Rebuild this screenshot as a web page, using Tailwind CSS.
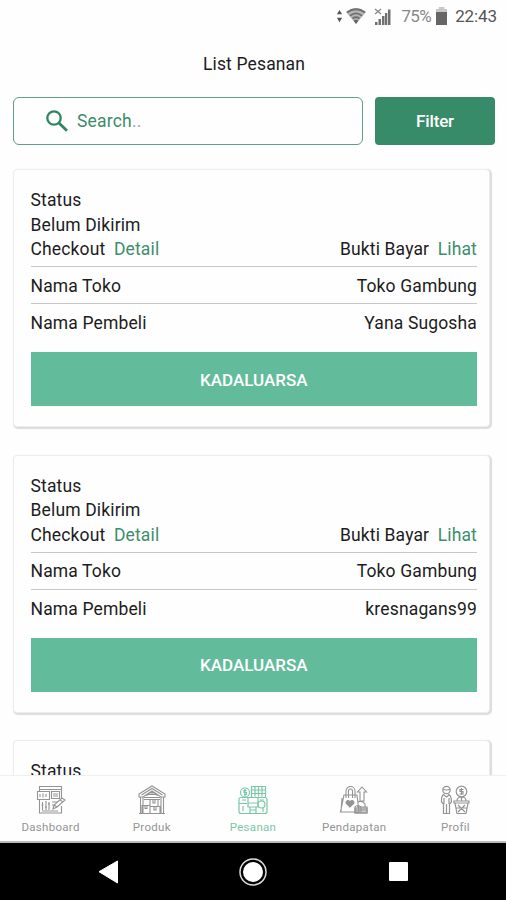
<!DOCTYPE html>
<html lang="id">
<head>
<meta charset="utf-8">
<title>List Pesanan</title>
<script src="https://cdn.jsdelivr.net/npm/@tailwindcss/browser@4"></script>
</head>
<body class="bg-white">
<div class="w-[506px] h-[900px] overflow-hidden flex flex-col bg-[#fefefe] text-[#1c1c1c] font-['Roboto',sans-serif] text-[17.5px] leading-[24.5px]">
  <header class="h-8 shrink-0 flex items-center justify-end pr-[9px] text-[#555]">
    <svg class="w-[7px] h-[14px] mr-[3px]" viewBox="0 0 8 14" fill="#555"><path d="M4 0 7 5H1zM4 14 1 9H7z"/></svg>
    <svg class="w-[20px] h-[16px] mr-[8px]" viewBox="0 0 20 16"><path d="M0 4Q10-4 20 4L10 16z" fill="#b5b5b5"/><g fill="none" stroke="#707070" stroke-width="1.8"><path d="M1 4.5Q10-2 19 4.5M4 7.700Q10 3 16 7.700M6.500 10.500Q10 8 13.500 10.500"/></g><path d="M7.500 12.500Q10 11 12.500 12.500L10 16z" fill="#666"/></svg>
    <svg class="w-[17px] h-[17px] mr-[10px]" viewBox="0 0 17 17"><path d="M1 1 7 6M7 1 1 6" stroke="#888" stroke-width="1.300"/><path d="M1 14h2.500v3H1zM4.500 11H7v6H4.500zM8 8h2.500v9H8zM11 5h2.300v12H11zM14 1.500h2.500V17H14z" fill="#707070"/></svg>
    <span class="text-[17px] text-[#888] mr-[5px] tracking-[-0.600px]">75%</span>
    <svg class="w-[11px] h-[18px] mr-[8px]" viewBox="0 0 12 18" preserveAspectRatio="none"><path d="M3 0h6v2h3v5H0V2h3z" fill="#c8c8c8"/><path d="M0 5h12v13H0z" fill="#666"/></svg>
    <span class="text-[17px] tracking-[-0.100px]">22:43</span>
  </header>
  <h1 class="h-[65px] shrink-0 text-center pt-[20px] pl-[2px] tracking-[0.150px]">List Pesanan</h1>
  <div class="flex gap-[12px] pl-[13px] pr-[11px] h-[48px] shrink-0">
    <div class="w-[350px] rounded-[6px] border-[1.5px] border-[#5f9f84] flex items-center pl-[32px] text-[#3e8b6c]">
      <svg class="w-[22px] h-[22px] mr-[9px]" viewBox="0 0 22 22" fill="none" stroke="#2f8664" stroke-width="2.300"><circle cx="8" cy="8" r="6.700"/><path d="m13 13 8 7.800" stroke-width="2.800"/></svg>
      <span class="pt-px tracking-[0.200px]">Search<span class="text-[#98ad9e]">..</span></span>
    </div>
    <button class="flex-1 rounded-[4px] bg-[#378b69] text-white font-medium text-[17px] tracking-[-0.150px]">Filter</button>
  </div>
  <main class="flex-1 min-h-0 overflow-hidden pt-[24px] pl-[13px] pr-[16px] flex flex-col gap-[27.500px] tracking-[0.150px]">
    <section class="h-[258px] shrink-0 rounded-[4px] border border-[#ededed] shadow-[1px_1px_1px_1px_#dcdcdc] bg-[#fefefe] pt-[18px] pl-[16.500px] pr-[12px]">
      <div>Status</div><div>Belum Dikirim</div>
      <div class="flex justify-between h-[30px] border-b-[1.500px] border-[#c8c8c8]"><div>Checkout <span class="text-[#3c8e6c] ml-1">Detail</span></div><div>Bukti Bayar <span class="text-[#3c8e6c] ml-1">Lihat</span></div></div>
      <div class="flex justify-between items-center pt-[2px] h-[37px] border-b-[1.500px] border-[#c8c8c8]"><span>Nama Toko</span><span>Toko Gambung</span></div>
      <div class="flex justify-between items-center pt-[2px] h-[37px]"><span>Nama Pembeli</span><span>Yana Sugosha</span></div>
      <button class="block mt-[11px] w-full h-[54px] pt-[2px] bg-[#62bc9b] text-white font-medium text-[17px] tracking-normal">KADALUARSA</button>
    </section>
    <section class="h-[258px] shrink-0 rounded-[4px] border border-[#ededed] shadow-[1px_1px_1px_1px_#dcdcdc] bg-[#fefefe] pt-[18px] pl-[16.500px] pr-[12px]">
      <div>Status</div><div>Belum Dikirim</div>
      <div class="flex justify-between h-[30px] border-b-[1.500px] border-[#c8c8c8]"><div>Checkout <span class="text-[#3c8e6c] ml-1">Detail</span></div><div>Bukti Bayar <span class="text-[#3c8e6c] ml-1">Lihat</span></div></div>
      <div class="flex justify-between items-center pt-[2px] h-[37px] border-b-[1.500px] border-[#c8c8c8]"><span>Nama Toko</span><span>Toko Gambung</span></div>
      <div class="flex justify-between items-center pt-[2px] h-[37px]"><span>Nama Pembeli</span><span>kresnagans99</span></div>
      <button class="block mt-[11px] w-full h-[54px] pt-[2px] bg-[#62bc9b] text-white font-medium text-[17px] tracking-normal">KADALUARSA</button>
    </section>
    <section class="h-[258px] shrink-0 rounded-[4px] border border-[#ededed] shadow-[1px_1px_1px_1px_#dcdcdc] bg-[#fefefe] pt-[18px] pl-[16.500px] pr-[12px]">
      <div>Status</div>
    </section>
  </main>
  <nav class="h-[68px] shrink-0 border-t border-t-[#f0f0f0] border-b-2 border-b-[#bbb] bg-[#fefefe] grid grid-cols-5 text-[11.500px] leading-[14px] tracking-[0.300px] text-[#949494] pt-[9px]">
    <div class="flex flex-col items-center gap-[5px]">
      <svg class="w-[30px] h-[30px]" viewBox="0 0 30 30" fill="none" stroke="currentColor" stroke-width="1.100"><path d="M3.500 6V1.500h22V14M3.500 4.500h22M25.500 21v7h-22V23M1.500 6.500h12v8h-12zM15.500 6.500h8v7h-8zM4 9v3M7 8.500v4M10 9v3M17 9h5M17 11h5M3.500 14.500v13M6.500 17v8M10 16v9M13 17v8M5.500 20h2M9 22h2M12 19h2M16 17h6M16 20h3M6 26h16"/><path d="m17 24 1-4 8-7 3 2-8 7zM18 20l3 2M24 15l3 2"/></svg>
      <span>Dashboard</span></div>
    <div class="flex flex-col items-center gap-[5px]">
      <svg class="w-[30px] h-[30px]" viewBox="0 0 30 30" fill="none" stroke="currentColor" stroke-width="1.100"><path d="M2 9 15 1l13 8v3h-4L15 6l-9 6H2zM4.500 10 15 3.500 25.500 10M3.500 12v16M6 12v16M24 12v16M26.500 12v16M2 28.500h26M7 12.500h16M7 14.500h16M10 11V9.500h10V11M11 9h8M13 7.500h4M5 20.500h8v8H5zM13 14.500h8v7h-8zM13 21.500h10v7H13zM8 20.500v3h2v-3M16 15v3h2v-3M17 22v3h2v-3"/></svg>
      <span>Produk</span></div>
    <div class="flex flex-col items-center gap-[5px] text-[#7bc7a8]">
      <svg class="w-[30px] h-[30px]" viewBox="0 0 30 30" fill="none" stroke="currentColor" stroke-width="1.200"><circle cx="7" cy="7.500" r="4.500"/><path d="M8.500 5.500H6v2h2.500v2H6M7 4v7M13.500 12V1.500h14V12M13.500 5h14M13.500 8.500h14M17 1.500v10M20.500 1.500v10M24 1.500v10M3 12.500h24q2 0 2 2v12q0 2-2 2H3q-2 0-2-2v-12q0-2 2-2M1 18.500h8M4 15h4M10 13v5M20 13v5M22 15h4M10 18h10v4H10zM12 22v6M18 22v6M12 25h6M5 21v5M25 23v4"/><circle cx="23.500" cy="19.500" r="3.500"/></svg>
      <span>Pesanan</span></div>
    <div class="flex flex-col items-center gap-[5px]">
      <svg class="w-[30px] h-[30px]" viewBox="0 0 30 30" fill="none" stroke="currentColor" stroke-width="1.100"><path d="M7 13V6a4.500 4.500 0 0 1 9 0v7M9.500 13V6a2 2 0 0 1 4 0v7M5 10h13l2 17H1.500zM3 13l-1 14M23 2l4.500 5h-2.500v9h-4V7H18.500zM19 17q4-2 7 2v3M16 22q3-3 6 0v6h-6zM22 22h6v6h-6zM16 25h12M18 22h8"/><path d="m11 22-4-4c0-3 3-3 4-1 1-2 4-2 4 1z" fill="currentColor"/><path d="M16 23h12v5H16z" fill="currentColor" fill-opacity=".45"/></svg>
      <span>Pendapatan</span></div>
    <div class="flex flex-col items-center gap-[5px]">
      <svg class="w-[30px] h-[30px]" viewBox="0 0 30 30" fill="none" stroke="currentColor" stroke-width="1.200"><circle cx="6.500" cy="5" r="3.700"/><path d="M3 4q4 2 7 0M4 9Q1 11 1.500 17l2 2v9.500h6V19l2-2q0-6-3-8M4 13v6M9 13v6M6.500 19v9M4 10l2.500 2L9 10"/><circle cx="21.500" cy="6.500" r="5.300"/><path d="M23.500 4.500H20v2h3v2.500h-3.500M21.500 3v7M15 18h13l-2 10.500h-9zM14 16h15v2H14zM17 16q0-4 4.500-4t4.500 4M18 20l7 7M25 20l-7 7M16 23h11M21.500 12v4"/></svg>
      <span>Profil</span></div>
  </nav>
  <footer class="h-[57px] shrink-0 bg-black flex items-center pl-[98px]">
    <svg class="w-[21px] h-[24px]" viewBox="0 0 21 24"><path d="M1 11.700 19.500 1v22z" fill="#fff" stroke="#fff" stroke-linejoin="round"/></svg>
    <svg class="w-[30px] h-[30px] ml-[119px]" viewBox="0 0 30 30"><circle cx="15" cy="15" r="13" fill="none" stroke="#ddd" stroke-width="1.500"/><circle cx="15" cy="15" r="10" fill="#fff"/></svg>
    <div class="w-[19px] h-[19px] ml-[121px] bg-white rounded-[1px]"></div>
  </footer>
</div>
</body>
</html>
